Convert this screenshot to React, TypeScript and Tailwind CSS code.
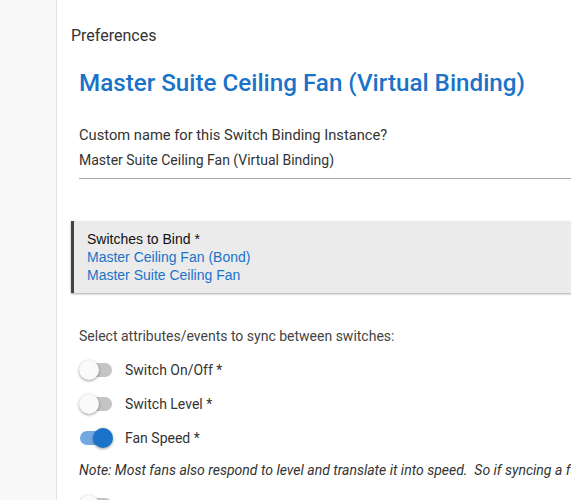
import React from "react";

function Toggle({ on }: { on: boolean }) {
  return (
    <div className="relative w-[34px] h-[20px] flex items-center shrink-0">
      <div className={`absolute left-[1px] w-[32px] h-[14px] rounded-full ${on ? "bg-[#72a9e3]" : "bg-[#c4c4c4]"}`} />
      <div
        className={`absolute top-0 w-[20px] h-[20px] rounded-full shadow-[0_1px_3px_rgba(0,0,0,0.4)] ${on ? "left-[14px] bg-[#1a73c9]" : "left-0 bg-[#fafafa]"}`}
      />
    </div>
  );
}

export default function App() {
  const roboto = { fontFamily: "Roboto, 'Liberation Sans', sans-serif" };
  return (
    <div className="flex w-[571px] h-[500px] overflow-hidden bg-white" style={roboto}>
      <div className="w-[57px] shrink-0 bg-[#f9f9f9] border-r border-[#e3e3e3]" />
      <div className="flex-1 min-w-0 pl-[14px] pt-[26px]">
        <div className="text-[16px] leading-[20px] text-[#333]">Preferences</div>
        <div className="pl-[8px] mt-[21px] text-[24.2px] leading-[32px] font-medium text-[#1a73c9] whitespace-nowrap">
          Master Suite Ceiling Fan (Virtual Binding)
        </div>
        <div className="pl-[8px] mt-[27px] text-[14.7px] leading-[18px] text-[#333]">
          Custom name for this Switch Binding Instance?
        </div>
        <div className="ml-[8px] mt-[7px] pb-[9px] border-b border-[#a8a8a8] text-[14px] leading-[18px] text-[#333] whitespace-nowrap">
          Master Suite Ceiling Fan (Virtual Binding)
        </div>
        <div
          className="mt-[42px] w-[520px] h-[72px] bg-[#ebebeb] border-l-[3px] border-[#444] shadow-[0_1px_2px_rgba(0,0,0,0.35)] pl-[13px] pt-[9px] text-[14px] leading-[18px]"
          style={{ fontFamily: "'Liberation Sans', Arial, sans-serif" }}
        >
          <div className="text-[#111]">Switches to Bind *</div>
          <div className="text-[#1a73c9]">Master Ceiling Fan (Bond)</div>
          <div className="text-[#1a73c9]">Master Suite Ceiling Fan</div>
        </div>
        <div className="pl-[8px] mt-[34px] text-[14px] leading-[18px] text-[#444]">
          Select attributes/events to sync between switches:
        </div>
        <div className="pl-[8px] mt-[15px] flex flex-col gap-[14px]">
          {[
            ["Switch On/Off *", false],
            ["Switch Level *", false],
            ["Fan Speed *", true],
          ].map(([label, on]) => (
            <div key={label as string} className="flex items-center gap-[12px]">
              <Toggle on={on as boolean} />
              <span className="text-[14px] leading-[20px] text-[#333]">{label as string}</span>
            </div>
          ))}
        </div>
        <div className="pl-[8px] mt-[13px] text-[14px] leading-[18px] italic text-[#333] whitespace-nowrap overflow-hidden">
          Note: Most fans also respond to level and translate it into speed.&nbsp; So if syncing a fan with a dimmer
        </div>
        <div className="pl-[8px] mt-[16px]">
          <Toggle on={false} />
        </div>
      </div>
    </div>
  );
}
